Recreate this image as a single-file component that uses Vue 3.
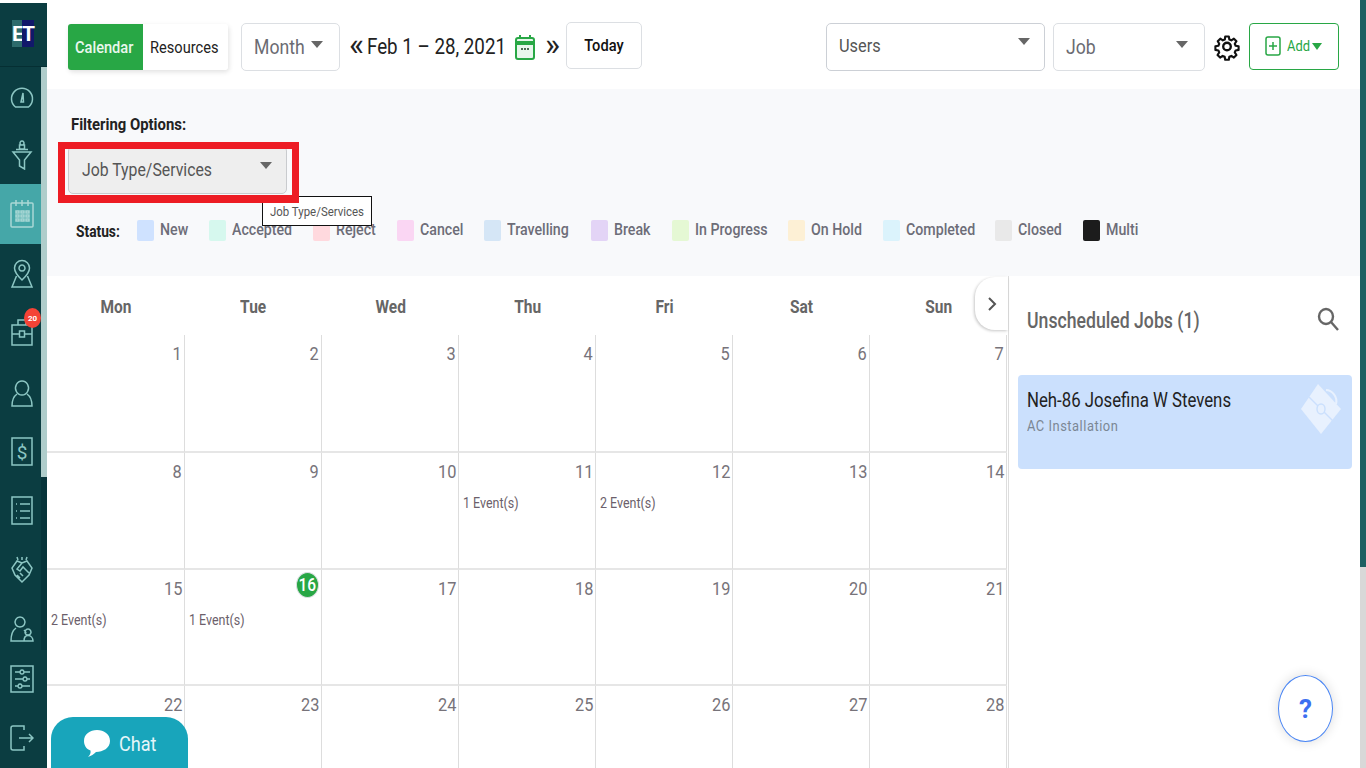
<script setup>
const nav = [
  { h: 59, d: 'M5.5 25H18.5A10.5 10.5 0 1 0 5.5 25Z M11 20L13 11L13.5 20Z' },
  { h: 58, d: 'M12 1a2 2 0 1 0 .01 0Z M9.5 5h5v4h-5z M3 12H21L14.5 20V29L9.5 26V20Z M6 9.5h12' },
  { h: 60, active: true, d: 'M2 4H22A1 1 0 0 1 23 5V27a1 1 0 0 1-1 1H2a1 1 0 0 1-1-1V5a1 1 0 0 1 1-1Z M6 1V7 M12 1V7 M18 1V7 M6 12h3v2h-3z M11 12h3v2h-3z M16 12h3v2h-3z M6 16h3v2h-3z M11 16h3v2h-3z M16 16h3v2h-3z M6 20h3v2h-3z M11 20h3v2h-3z M16 20h3v2h-3z' },
  { h: 60, d: 'M12 1.5a7.5 7.5 0 0 0-7.5 7.5c0 5 7.5 12 7.5 12s7.5-7 7.5-12a7.5 7.5 0 0 0-7.5-7.5Z M12 6a3 3 0 1 0 .01 0Z M6.5 17L2 28H22L17.5 17' },
  { h: 60, badge: '20', d: 'M2 6H22V26H2Z M8 6V1H16V6 M2 15H9.5 M14.5 15H22 M9.5 12h5v6h-5z' },
  { h: 59, d: 'M12 2a6.5 7 0 1 0 .01 0Z M7 15C4 17 2 21 2 27H22C22 21 20 17 17 15' },
  { h: 58, glyph: '$', d: 'M2 1H22V28H2Z' },
  { h: 59, d: 'M2 1H22V28H2Z M6 8h1 M10 8H20 M6 15h1 M10 15H20 M6 22h1 M10 22H20' },
  { h: 60, d: 'M12 8L7 6L2 13L5 20L12 27L19 20L22 13L17 6L12 8Z M12 8L7 14L10 16L13 12L19 18 M7 20l3 3 M10 18l3 3 M12 2V5 M7 2l1 3 M17 2l-1 3' },
  { h: 58, d: 'M10 3a5 5 0 1 0 .01 0Z M6 14C3 16 1 20 1 27H14 M18 15a3 3 0 1 0 .01 0Z M14 27C14 23 16 21.5 18 21.5C21 21.5 23 24 23 27H14Z M14 16C15 17 16 18 16 19' },
  { h: 42, d: 'M1 2H23V28H1Z M5 8H10 M14 8H20 M12 6a2 2 0 1 0 .01 0Z M5 15H13 M17 15H20 M15 13a2 2 0 1 0 .01 0Z M5 22H8 M12 22H20 M10 20a2 2 0 1 0 .01 0Z' },
  { h: 76, d: 'M14 7V3H3C2 3 1 4 1 5V25C1 26 2 27 3 27H14V23 M9 15H23 M19 11L23 15L19 19' }
]

const statuses = [
  { label: 'New', color: '#cfe2ff' },
  { label: 'Accepted', color: '#d6f8ee' },
  { label: 'Reject', color: '#ffd9de' },
  { label: 'Cancel', color: '#fad6f3' },
  { label: 'Travelling', color: '#d5e6f6' },
  { label: 'Break', color: '#e3d4f6' },
  { label: 'In Progress', color: '#e5f8d4' },
  { label: 'On Hold', color: '#fdf0d5' },
  { label: 'Completed', color: '#dbf3fc' },
  { label: 'Closed', color: '#e9e9e9' },
  { label: 'Multi', color: '#1c1c1c' }
]

const days = ['Mon', 'Tue', 'Wed', 'Thu', 'Fri', 'Sat', 'Sun']
const events = { 11: '1 Event(s)', 12: '2 Event(s)', 15: '2 Event(s)', 16: '1 Event(s)' }
const dates = Array.from({ length: 28 }, (_, i) => i + 1)
</script>

<template>
  <div class="app">
    <aside class="sidebar">
      <div class="logo"><span class="logo-e">E</span><span class="logo-t">T</span></div>
      <div class="thumb"></div>
      <nav class="nav">
        <div
          v-for="(item, i) in nav"
          :key="i"
          class="nav-item"
          :class="{ active: item.active }"
          :style="{ height: item.h + 'px' }"
        >
          <svg class="nav-icon" width="24" height="30" viewBox="0 0 24 30">
            <path :d="item.d" />
            <text v-if="item.glyph" x="12" y="22" text-anchor="middle" class="nav-glyph">{{ item.glyph }}</text>
          </svg>
          <span v-if="item.badge" class="nav-badge">{{ item.badge }}</span>
        </div>
      </nav>
    </aside>

    <main class="main">
      <header class="topbar">
        <div class="tabs">
          <button class="tab tab-on"><span class="sx">Calendar</span></button>
          <button class="tab tab-off"><span class="sx">Resources</span></button>
        </div>
        <div class="select month"><span class="sx">Month</span><i class="caret"></i></div>
        <span class="chev chev-l">«</span>
        <span class="range sx">Feb 1 – 28, 2021</span>
        <svg class="cal-ico" width="22" height="28" viewBox="0 0 22 28">
          <rect x="2" y="5" width="18" height="21" rx="2" fill="#e8f6ec" stroke="#28a745" stroke-width="2" />
          <path d="M2 10H20" stroke="#28a745" stroke-width="4" />
          <path d="M6 2V6M16 2V6" stroke="#28a745" stroke-width="2" />
          <path d="M7 16h2M10 16h2M13 16h2" stroke="#4a6b52" stroke-width="2" />
        </svg>
        <span class="chev chev-r">»</span>
        <button class="today"><span class="sx sx-c">Today</span></button>
        <div class="spacer"></div>
        <div class="select users"><span class="sx">Users</span><i class="caret caret-high"></i></div>
        <div class="select job"><span class="sx">Job</span><i class="caret"></i></div>
        <svg class="gear" width="26" height="31" viewBox="1 1 22 22" fill="none" stroke="#111" stroke-width="2" stroke-linejoin="round">
          <circle cx="12" cy="12" r="3.2" />
          <path d="M10.3 2.6h3.4l.5 2.8 1.9.8 2.4-1.6 2.4 2.4-1.6 2.4.8 1.9 2.8.5v3.4l-2.8.5-.8 1.9 1.6 2.4-2.4 2.4-2.4-1.6-1.9.8-.5 2.8h-3.4l-.5-2.8-1.9-.8-2.4 1.6-2.4-2.4 1.6-2.4-.8-1.9-2.8-.5v-3.4l2.8-.5.8-1.9L3.3 7l2.4-2.4 2.4 1.6 1.9-.8z" transform="translate(1.2 1.2) scale(.9)" />
        </svg>
        <button class="add">
          <svg width="16" height="20" viewBox="0 0 16 20" fill="none" stroke="#28a745" stroke-width="1.5">
            <rect x="1" y="1" width="14" height="18" rx="2" />
            <path d="M8 6V14M4 10H12" />
          </svg>
          <span class="add-label sx">Add</span>
          <i class="caret caret-green"></i>
        </button>
      </header>

      <section class="filters">
        <div class="filter-title sx">Filtering Options:</div>
        <div class="filter-select"><span class="sx">Job Type/Services</span><i class="caret caret-high"></i></div>
        <span class="highlight"></span>
        <span class="tooltip"><span class="sx">Job Type/Services</span></span>
        <div class="legend">
          <span class="legend-title sx">Status:</span>
          <div v-for="s in statuses" :key="s.label" class="legend-item">
            <i class="swatch" :style="{ background: s.color }"></i>
            <span class="sx legend-text">{{ s.label }}</span>
          </div>
        </div>
      </section>

      <section class="body">
        <div class="calendar">
          <div class="week">
            <div v-for="d in days" :key="d" class="day-name"><span class="sx sx-c">{{ d }}</span></div>
            <button class="next">
              <svg width="10" height="16" viewBox="0 0 10 16" fill="none" stroke="#555" stroke-width="2"><path d="M2 2L8 8L2 14" /></svg>
            </button>
          </div>
          <div class="grid">
            <div v-for="n in dates" :key="n" class="cell">
              <div class="num" :class="{ today: n === 16 }"><span class="sx sx-r">{{ n }}</span></div>
              <div v-if="events[n]" class="event"><span class="sx">{{ events[n] }}</span></div>
            </div>
          </div>
        </div>

        <aside class="panel">
          <div class="panel-head">
            <h2 class="panel-title sx">Unscheduled Jobs (1)</h2>
            <svg width="22" height="24" viewBox="0 0 22 24" fill="none" stroke="#666" stroke-width="2.4">
              <ellipse cx="9" cy="9.5" rx="7" ry="7.5" />
              <path d="M14 15L21 23" />
            </svg>
          </div>
          <div class="job-card">
            <div class="job-name sx">Neh-86 Josefina W Stevens</div>
            <div class="job-sub sx">AC Installation</div>
            <svg class="job-ico" width="42" height="52" viewBox="0 0 42 52">
              <path d="M18 1L41 26L21 51L1 26Z" fill="#e8f1fe" />
              <path d="M26 7C32 7 38 14 36 21" fill="none" stroke="#e8f1fe" stroke-width="2" />
              <path d="M9 14L33 38" stroke="#cbe0fd" stroke-width="1.5" />
              <ellipse cx="21" cy="26" rx="4" ry="5" fill="#e8f1fe" stroke="#cbe0fd" stroke-width="1.5" />
            </svg>
          </div>
        </aside>
      </section>
    </main>

    <div class="page-scroll"><div class="page-thumb"></div></div>

    <button class="chat">
      <svg width="28" height="30" viewBox="0 0 28 30"><path d="M14 2C21 2 27 6 27 13C27 20 20 24 13 24C11 26 8 28 5 29C7 27 8 25 7.5 22.5C3 21 1 17 1 13C1 6 7 2 14 2Z" fill="#fff" /></svg>
      <span class="chat-label sx">Chat</span>
    </button>
    <button class="help">?</button>
  </div>
</template>

<style>
html, body { margin: 0; overflow: hidden; background: #fff; }
</style>

<style scoped>
.app {
  display: flex;
  width: 1366px;
  height: 768px;
  overflow: hidden;
  position: relative;
  font-family: Roboto, "Liberation Sans", sans-serif;
  color: #666;
  background: #fff;
}
button { font-family: inherit; cursor: pointer; }
.sx { display: inline-block; transform: scaleX(.86); transform-origin: left center; white-space: nowrap; }
.sx-r { transform-origin: right center; }
.sx-c { transform-origin: center center; }

/* sidebar */
.sidebar {
  width: 47px;
  height: 765px;
  margin-top: 3px;
  flex: none;
  background: #0b3d41;
  position: relative;
  overflow: hidden;
}
.logo {
  height: 64px;
  display: flex;
  align-items: flex-start;
  justify-content: center;
  border-bottom: 1px solid #052f33;
  font-weight: 700;
  color: #fff;
  padding: 17px 1px 0 0;
  box-sizing: border-box;
}
.logo-e, .logo-t { font-size: 21px; height: 27px; line-height: 29px; text-align: center; }
.logo-e { background: #2d6b6c; width: 10px; }
.logo-t { background: #11186a; width: 12px; }
.thumb {
  position: absolute;
  right: 0;
  top: 64px;
  width: 6px;
  height: 410px;
  background: #afcdcb;
  box-shadow: 0 173px 0 #07343a;
}
.nav { display: flex; flex-direction: column; }
.nav-item {
  width: 41px;
  display: flex;
  align-items: center;
  justify-content: center;
  position: relative;
  padding-left: 3px;
  box-sizing: border-box;
}
.nav-item.active { background: #45a7a8; }
.nav-icon { fill: none; stroke: #8cc6c3; stroke-width: 1.5; }
.nav-item.active .nav-icon { stroke: #a9d8d5; }
.nav-glyph { font-size: 19px; font-family: Roboto, sans-serif; fill: #8cc6c3; stroke: none; }
.nav-badge {
  position: absolute;
  left: 24px;
  top: 4px;
  width: 17px;
  height: 20px;
  border-radius: 50%;
  background: #f44336;
  color: #fff;
  font-size: 8px;
  font-weight: 700;
  display: flex;
  align-items: center;
  justify-content: center;
}

/* main */
.main { width: 1313px; flex: none; display: flex; flex-direction: column; }
.topbar {
  height: 89px;
  flex: none;
  display: flex;
  align-items: center;
  padding: 4px 21px 0 21px;
  box-sizing: border-box;
  background: #fff;
}
.tabs { display: flex; height: 46px; margin-top: 1px; box-shadow: 1px 2px 5px rgba(0,0,0,.12); border-radius: 4px; }
.tab { border: 0; font-size: 17px; padding: 0 0 0 7px; text-align: left; }
.tab-on { width: 75px; background: #28a745; color: #e9f7ed; font-weight: 500; border-radius: 3px 0 0 3px; }
.tab-off { width: 85px; background: #fff; color: #222; border-radius: 0 3px 3px 0; }
.select {
  height: 48px;
  box-sizing: border-box;
  border: 1px solid #dcdfe3;
  border-radius: 5px;
  background: #fff;
  display: flex;
  align-items: center;
  justify-content: space-between;
  color: #6b6b72;
  font-size: 20.5px;
}
.caret {
  width: 0;
  height: 0;
  border-left: 6px solid transparent;
  border-right: 6px solid transparent;
  border-top: 7px solid #666;
  flex: none;
}
.month { width: 99px; margin-left: 13px; padding: 0 16px 0 12px; }
.month .sx { margin-right: -10px; }
.month .caret { margin-top: -5px; margin-left: 3px; }
.chev { font-size: 32px; color: #222; line-height: 40px; margin-top: -6px; width: 14px; display: block; text-align: center; }
.chev-l { margin-left: 9px; }
.range { width: 138px; margin-left: 4px; font-size: 21.8px; color: #222; }
.cal-ico { margin-left: 9px; flex: none; }
.chev-r { margin-left: 9px; }
.today {
  width: 76px;
  height: 47px;
  margin-left: 7px;
  margin-top: -3px;
  background: #fff;
  border: 1px solid #dcdfe3;
  border-radius: 5px;
  color: #111;
  font-weight: 500;
  font-size: 17px;
  padding: 0;
}
.spacer { flex: 1; }
.users { width: 219px; padding: 0 14px 2px 12px; font-size: 19px; color: #555; border-color: #ccd0d6; }
.users .caret-high { margin-top: -8px; }
.caret-high { margin-top: -10px; }
.job { width: 152px; margin-left: 8px; padding: 0 16px 0 12px; }
.job .caret { margin-top: -4px; }
.gear { margin-left: 9px; margin-top: -1px; flex: none; }
.add {
  width: 90px;
  height: 47px;
  margin-left: 9px;
  margin-top: -1px;
  flex: none;
  background: #fff;
  border: 1px solid #28a745;
  border-radius: 4px;
  display: flex;
  align-items: center;
  padding: 0 0 0 15px;
  box-sizing: border-box;
  color: #28a745;
  font-size: 15px;
}
.add-label { margin-left: 6px; width: 26px; }
.caret-green { border-top-color: #28a745; border-left-width: 5px; border-right-width: 5px; margin-left: -1px; }

/* filters */
.filters {
  height: 187px;
  flex: none;
  background: #f8f9fb;
  position: relative;
  padding: 25px 21px 0;
  box-sizing: border-box;
}
.filter-title { color: #222; font-weight: 700; font-size: 17.3px; line-height: 20px; margin-left: 3px; }
.filter-select {
  width: 219px;
  height: 48px;
  margin-top: 12px;
  box-sizing: border-box;
  background: #eee;
  border: 1px solid #c9cbce;
  border-radius: 5px;
  display: flex;
  align-items: center;
  justify-content: space-between;
  padding: 0 14px 2px 13px;
  color: #555;
  font-size: 18.4px;
}
.filter-select .caret-high { margin-top: -8px; }
.highlight {
  position: absolute;
  left: 11px;
  top: 53px;
  width: 241px;
  height: 61px;
  box-sizing: border-box;
  border: 7px solid #ed1c24;
  border-bottom-width: 8px;
  z-index: 3;
}
.tooltip {
  position: absolute;
  left: 215px;
  top: 107px;
  width: 110px;
  height: 30px;
  box-sizing: border-box;
  background: #fff;
  border: 1px solid #111;
  font-size: 13.3px;
  line-height: 30px;
  padding-left: 7px;
  color: #555;
  z-index: 2;
}
.legend {
  display: grid;
  grid-template-columns: 61px 72px 104px 84px 87px 107px 81px 116px 95px 112px 88px auto;
  align-items: center;
  margin: 26px 0 0 8px;
  font-weight: 500;
  font-size: 16.5px;
  color: #6d6d78;
  height: 21px;
}
.legend-title { color: #222; font-weight: 700; font-size: 16px; margin-top: 2px; }
.legend-item { display: flex; align-items: center; gap: 6px; }
.legend-text { margin-top: -2px; }
.swatch { width: 17px; height: 21px; border-radius: 2px; flex: none; }

/* body */
.body { flex: 1; display: flex; min-height: 0; }
.calendar { width: 961px; flex: none; }
.week {
  height: 59px;
  display: grid;
  grid-template-columns: 138px repeat(6, 137px);
  position: relative;
}
.day-name { text-align: center; font-weight: 700; font-size: 18px; line-height: 61px; color: #666; }
.next {
  position: absolute;
  right: 0;
  top: 1px;
  width: 33px;
  height: 53px;
  background: #fff;
  border: 0;
  border-radius: 20px 0 0 20px;
  box-shadow: -1px 1px 3px rgba(0,0,0,.22);
  padding: 0;
  display: flex;
  align-items: center;
  justify-content: center;
}
.grid {
  display: grid;
  grid-template-columns: 138px repeat(6, 137px);
  grid-template-rows: 118px 117px 116px 120px;
}
.cell {
  border-right: 1px solid #ddd;
  border-bottom: 2px solid #e6e6e6;
  box-sizing: border-box;
  padding: 8.5px 2px 0 4px;
  overflow: hidden;
}
.num { text-align: right; font-size: 19px; line-height: 20px; color: #77737a; }
.num.today {
  width: 21px;
  height: 24px;
  margin: -7px 0 0 auto;
  border-radius: 50%;
  background: #28a745;
  color: #fff;
  font-size: 18px;
  line-height: 24px;
  text-align: center;
}
.num.today .sx { transform-origin: center center; }
.event { margin-top: 14px; font-size: 14.5px; line-height: 16px; color: #6c5f6b; }
.num.today + .event { margin-top: 15px; }

.panel { flex: 1; border-left: 1px solid #ddd; padding: 0 8px 0 9px; box-sizing: border-box; }
.panel-head { height: 99px; display: flex; justify-content: space-between; padding: 31px 13px 0 9px; box-sizing: border-box; }
.panel-title { margin: 0; font-size: 22.5px; line-height: 26px; font-weight: 500; color: #666; height: 26px; transform: scaleX(.785); }
.job-card {
  height: 94px;
  background: #cbe0fd;
  border-radius: 4px;
  position: relative;
  padding: 14px 9px;
  box-sizing: border-box;
  width: 334px;
}
.job-name { display: block; font-size: 19.5px; line-height: 24px; color: #222; }
.job-sub { display: block; font-size: 15px; line-height: 20px; margin-top: 3px; color: #7b8794; letter-spacing: .6px; }
.job-ico { position: absolute; right: 10px; top: 8px; }

/* page scrollbar */
.page-scroll { width: 6px; flex: none; background: #d8d8d8; }
.page-thumb { height: 567px; background: #1d6062; }

/* floating */
.chat {
  position: absolute;
  left: 51px;
  bottom: 0;
  width: 137px;
  height: 51px;
  background: #18a5bb;
  border: 0;
  border-radius: 22px 22px 0 0;
  display: flex;
  align-items: center;
  padding: 0 0 0 32px;
  color: #e6f6f9;
  font-size: 21px;
}
.chat-label { margin-left: 8px; margin-top: 3px; }
.help {
  position: absolute;
  left: 1278px;
  top: 675px;
  width: 55px;
  height: 67px;
  border-radius: 50%;
  background: #fff;
  border: 1px solid #4a86f5;
  box-shadow: 0 0 12px rgba(0,0,0,.14);
  color: #3d6ff0;
  font-weight: 700;
  font-size: 26px;
  padding: 0;
}
</style>
